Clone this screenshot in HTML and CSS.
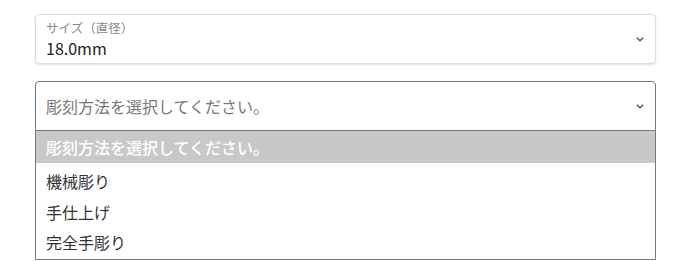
FILE: index.html
```html
<!DOCTYPE html>
<html lang="ja">
<head>
<meta charset="utf-8">
<link rel="stylesheet" href="styles.css">
</head>
<body>
<div class="wrap">
  <div class="field size">
    <div class="field-body">
      <div class="label">サイズ（直径）</div>
      <div class="value">18.0mm</div>
    </div>
    <svg class="chev" width="8" height="5" viewBox="0 0 8 5"><path d="M0.8 0.8 L4 3.8 L7.2 0.8" fill="none" stroke="#555" stroke-width="1.4"/></svg>
  </div>
  <div class="select-group">
    <div class="field method">
      <div class="placeholder">彫刻方法を選択してください。</div>
      <svg class="chev" width="8" height="5" viewBox="0 0 8 5"><path d="M0.8 0.8 L4 3.8 L7.2 0.8" fill="none" stroke="#555" stroke-width="1.4"/></svg>
    </div>
    <ul class="options">
      <li class="opt selected">彫刻方法を選択してください。</li>
      <li class="opt">機械彫り</li>
      <li class="opt">手仕上げ</li>
      <li class="opt">完全手彫り</li>
    </ul>
  </div>
</div>
</body>
</html>
```
FILE: styles.css
```css
* { box-sizing: border-box; }
html, body { margin: 0; padding: 0; background: #fff; }
body {
  font-family: "Noto Sans CJK JP", "Noto Sans", sans-serif;
  color: #222;
}
.wrap {
  width: 621px;
  margin-left: 35px;
  padding-top: 14px;
}
.field {
  display: flex;
  align-items: center;
  justify-content: space-between;
  height: 50px;
  padding: 0 10px 0 10px;
  background: #fff;
}
.size {
  border: 1px solid #dcdcdc;
  border-radius: 4px;
  box-shadow: 0 1px 2px rgba(0,0,0,0.12);
  padding-top: 1px;
}
.field-body { display: flex; flex-direction: column; }
.label {
  font-size: 12.5px;
  line-height: 18px;
  color: #888;
}
.value {
  font-size: 16px;
  line-height: 23px;
  color: #222;
}
.chev { flex: none; margin-right: 1px; }
.size .chev { margin-top: -1px; }
.select-group { margin-top: 17px; }
.method {
  border: 1px solid #777;
  border-radius: 4px 4px 0 0;
}
.placeholder {
  font-size: 16px;
  color: #777;
}
.options {
  list-style: none;
  margin: 0;
  padding: 0 0 1px 0;
  border: 1px solid #777;
  border-top: none;
}
.opt {
  font-size: 16px;
  line-height: 30.5px;
  padding-left: 10px;
  color: #333;
}
.opt.selected {
  background: #c8c8c8;
  color: #fff;
  font-weight: 500;
  line-height: 32px;
  margin-bottom: 3px;
}
```
